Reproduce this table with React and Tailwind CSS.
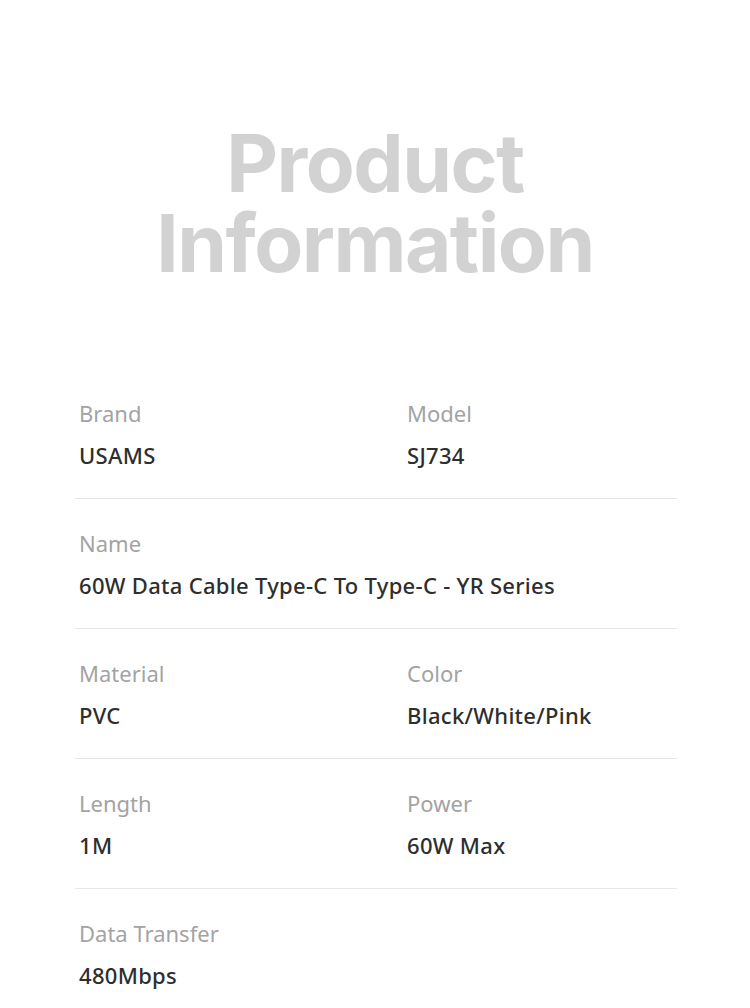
const rows = [
  [{ label: 'Brand', value: 'USAMS' }, { label: 'Model', value: 'SJ734' }],
  [{ label: 'Name', value: '60W Data Cable Type-C To Type-C - YR Series', wide: true }],
  [{ label: 'Material', value: 'PVC' }, { label: 'Color', value: 'Black/White/Pink' }],
  [{ label: 'Length', value: '1M' }, { label: 'Power', value: '60W Max' }],
  [{ label: 'Data Transfer', value: '480Mbps', wide: true }],
]

function Field({ label, value, wide }) {
  return (
    <div className={wide ? 'col-span-2' : ''}>
      <div className="text-[22px] leading-[32px] text-[#a3a3a3]">{label}</div>
      <div className="mt-[10px] text-[22px] leading-[32px] font-medium tracking-[0.3px] text-[#2e2e2e]">{value}</div>
    </div>
  )
}

export default function App() {
  return (
    <div className="w-[750px] h-[1008px] bg-white overflow-hidden font-['Noto_Sans',sans-serif]">
      <h1 className="pt-[123px] text-center font-['Inter',sans-serif] font-bold text-[80px] leading-[80px] tracking-[-1.5px] text-[#d2d2d2]">
        Product<br />Information
      </h1>

      <div className="mt-[86px] ml-[75px] mr-[73px]">
        {rows.map((row, i) => (
          <div key={i} className={`grid grid-cols-[328px_1fr] px-1 pt-[28px] pb-[27px] ${i > 0 ? 'border-t border-[#e6e6e6]' : ''}`}>
            {row.map(f => <Field key={f.label} {...f} />)}
          </div>
        ))}
      </div>
    </div>
  )
}
